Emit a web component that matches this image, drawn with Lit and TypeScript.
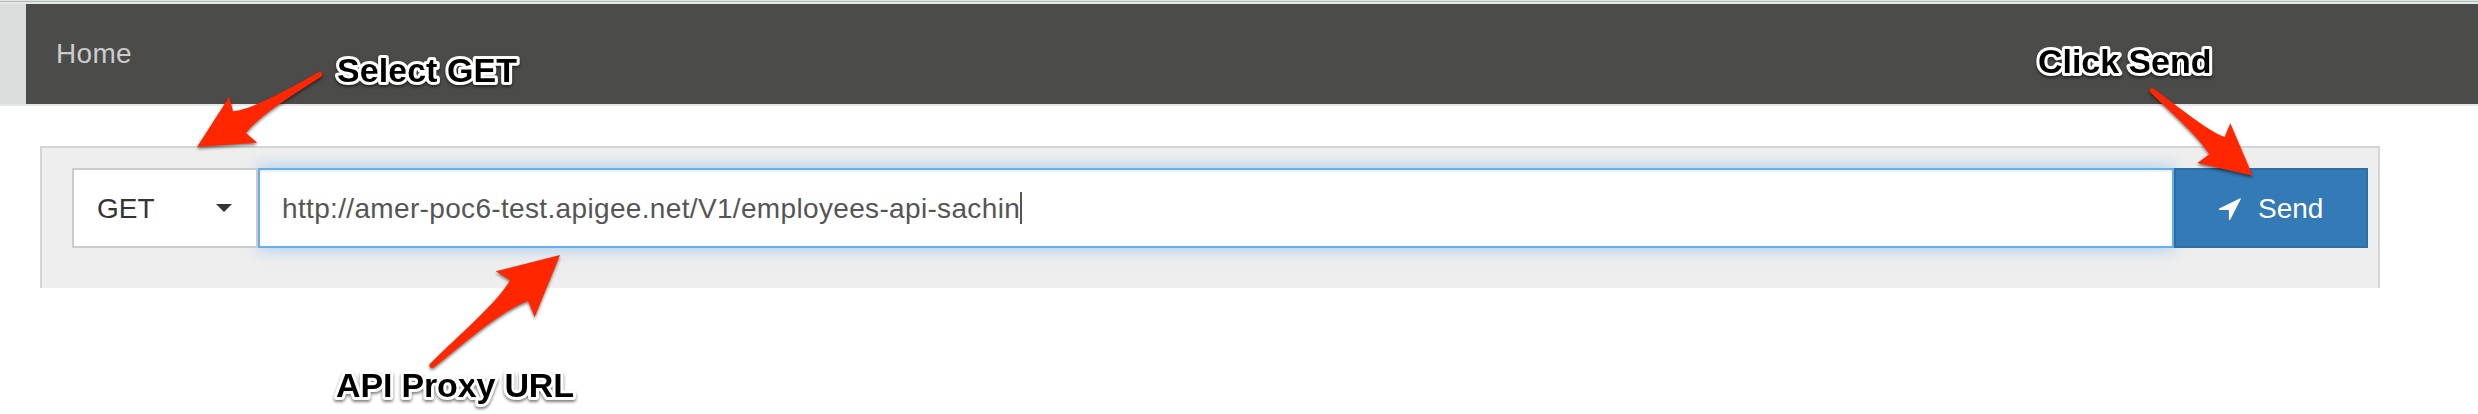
import { LitElement, html, svg, css } from "lit";
import { customElement, property, state } from "lit/decorators.js";

interface Callout {
  label: string;
  x: number;
  baseline: number;
  width: number;
  arrow: string;
}

const CALLOUTS: Callout[] = [
  {
    label: "Select GET",
    x: 337,
    baseline: 82,
    width: 180,
    arrow:
      "M197 147 L229.3 96.7 L233 111.3 C254 109 290 88 319 72 Q321.5 71 322.3 73.5 Q322.6 75.5 320.8 77 C290 97 262 113 246 133 L257.3 142.7 Z",
  },
  {
    label: "API Proxy URL",
    x: 336,
    baseline: 397,
    width: 238,
    arrow:
      "M560 255 L495.8 271.3 L510 280.3 C498 302 460 334 430 363.8 Q428.6 366 430 367.3 Q432 369 434.8 366.8 C465 343 498 313 528 301 L534.7 317 Z",
  },
  {
    label: "Click Send",
    x: 2038,
    baseline: 72.5,
    width: 173.5,
    arrow:
      "M2252.7 175.7 L2230.3 123.3 L2224.7 137 C2206 130 2178 106 2153.3 88.4 Q2151 87.2 2149.9 89 Q2149 91 2150.5 92.6 C2172 114 2198 136 2209.3 154.3 L2197.3 163 Z",
  },
];

@customElement("nav-bar")
class NavBar extends LitElement {
  static styles = css`
    :host {
      display: block;
      border-bottom: 2px solid #e7e7e7;
    }
    .edge {
      height: 1px;
      background: #e3e5e4;
      border-bottom: 1px solid #b2b6b4;
    }
    .gap {
      height: 2px;
      background: #e6e8e7;
    }
    .row {
      display: flex;
      height: 100px;
      background: #dadddc;
      padding-left: 26px;
    }
    .bar {
      flex: 1;
      background: #4b4b49;
      padding: 30px 0 0 30px;
      line-height: 40px;
      box-sizing: border-box;
      color: #ccc;
      letter-spacing: 0.3px;
    }
  `;
  render() {
    return html`
      <div class="edge"></div>
      <div class="gap"></div>
      <div class="row"><nav class="bar">Home</nav></div>
    `;
  }
}

@customElement("request-bar")
class RequestBar extends LitElement {
  @property() method = "GET";
  @property() url = "";

  static styles = css`
    :host {
      display: flex;
      box-sizing: border-box;
      width: 2340px;
      height: 142px;
      margin: 40px 0 0 40px;
      padding: 20px 10px 0 30px;
      background: #eee;
      border: 2px solid #d5d5d5;
      border-bottom: 0;
    }
    .method,
    .url,
    .send {
      display: flex;
      align-items: center;
      box-sizing: border-box;
      height: 80px;
      line-height: 40px;
    }
    .text {
      padding-top: 2px;
      white-space: nowrap;
    }
    .method {
      width: 186px;
      justify-content: space-between;
      padding: 0 24px 0 23px;
      background: #fff;
      border: 2px solid #ccc;
      color: #333;
      z-index: 1;
    }
    .caret {
      border-top: 8px solid #333;
      border-left: 8px solid transparent;
      border-right: 8px solid transparent;
    }
    .url {
      flex: 1;
      padding: 0 22px;
      background: #fff;
      border: 2px solid #66afe9;
      color: #555;
      box-shadow: inset 0 2px 2px rgba(0, 0, 0, 0.075),
        0 0 16px rgba(102, 175, 233, 0.6);
    }
    .value {
      letter-spacing: 0.34px;
    }
    .cursor {
      width: 2px;
      height: 32px;
      background: #555;
    }
    .send {
      width: 194px;
      gap: 16px;
      padding-left: 42px;
      background: #337ab7;
      border: 2px solid #2e6da4;
      color: #fff;
      z-index: 1;
    }
    .plane {
      width: 24px;
      height: 24px;
      margin-top: 2px;
      fill: #fff;
    }
  `;
  render() {
    return html`
      <div class="method">
        <span class="text">${this.method}</span><i class="caret"></i>
      </div>
      <div class="url">
        <span class="text value">${this.url}</span><i class="cursor"></i>
      </div>
      <div class="send">
        <svg class="plane" viewBox="0 0 24 24">
          <path d="M22.2 1.2 Q23 1.1 22.7 2.2 L12.3 22.6 Q11.2 23.6 10.9 22.4 V13 H1.6 Q.2 12.5 1.2 11.5 Z" />
        </svg>
        <span class="text">Send</span>
      </div>
    `;
  }
}

@customElement("callout-layer")
class CalloutLayer extends LitElement {
  static styles = css`
    :host {
      position: absolute;
      inset: 0;
      z-index: 2;
      pointer-events: none;
    }
    .canvas {
      display: block;
      width: 2478px;
      height: 414px;
    }
    .mark {
      filter: drop-shadow(0 2px 1.5px rgba(0, 0, 0, 0.5));
    }
    .arrow {
      fill: #ff2600;
    }
    .label {
      font: bold 34px "Liberation Sans", Arial, sans-serif;
      fill: #000;
      stroke: #fff;
      stroke-width: 6px;
      stroke-linejoin: round;
      paint-order: stroke;
    }
  `;
  render() {
    return html`<svg class="canvas" viewBox="0 0 2478 414">
      ${CALLOUTS.map(
        (c) => svg`
          <path class="arrow mark" d=${c.arrow}></path>
          <text class="label mark" x=${c.x} y=${c.baseline} textLength=${c.width}>${c.label}</text>`
      )}
    </svg>`;
  }
}

@customElement("app-root")
class AppRoot extends LitElement {
  @state() url = "http://amer-poc6-test.apigee.net/V1/employees-api-sachin";

  static styles = css`
    :host {
      display: block;
      position: relative;
      height: 414px;
      overflow: hidden;
      background: #fff;
      font: 28px "Liberation Sans", Arial, sans-serif;
    }
  `;
  render() {
    return html`
      <nav-bar></nav-bar>
      <request-bar method="GET" .url=${this.url}></request-bar>
      <callout-layer></callout-layer>
    `;
  }
}
